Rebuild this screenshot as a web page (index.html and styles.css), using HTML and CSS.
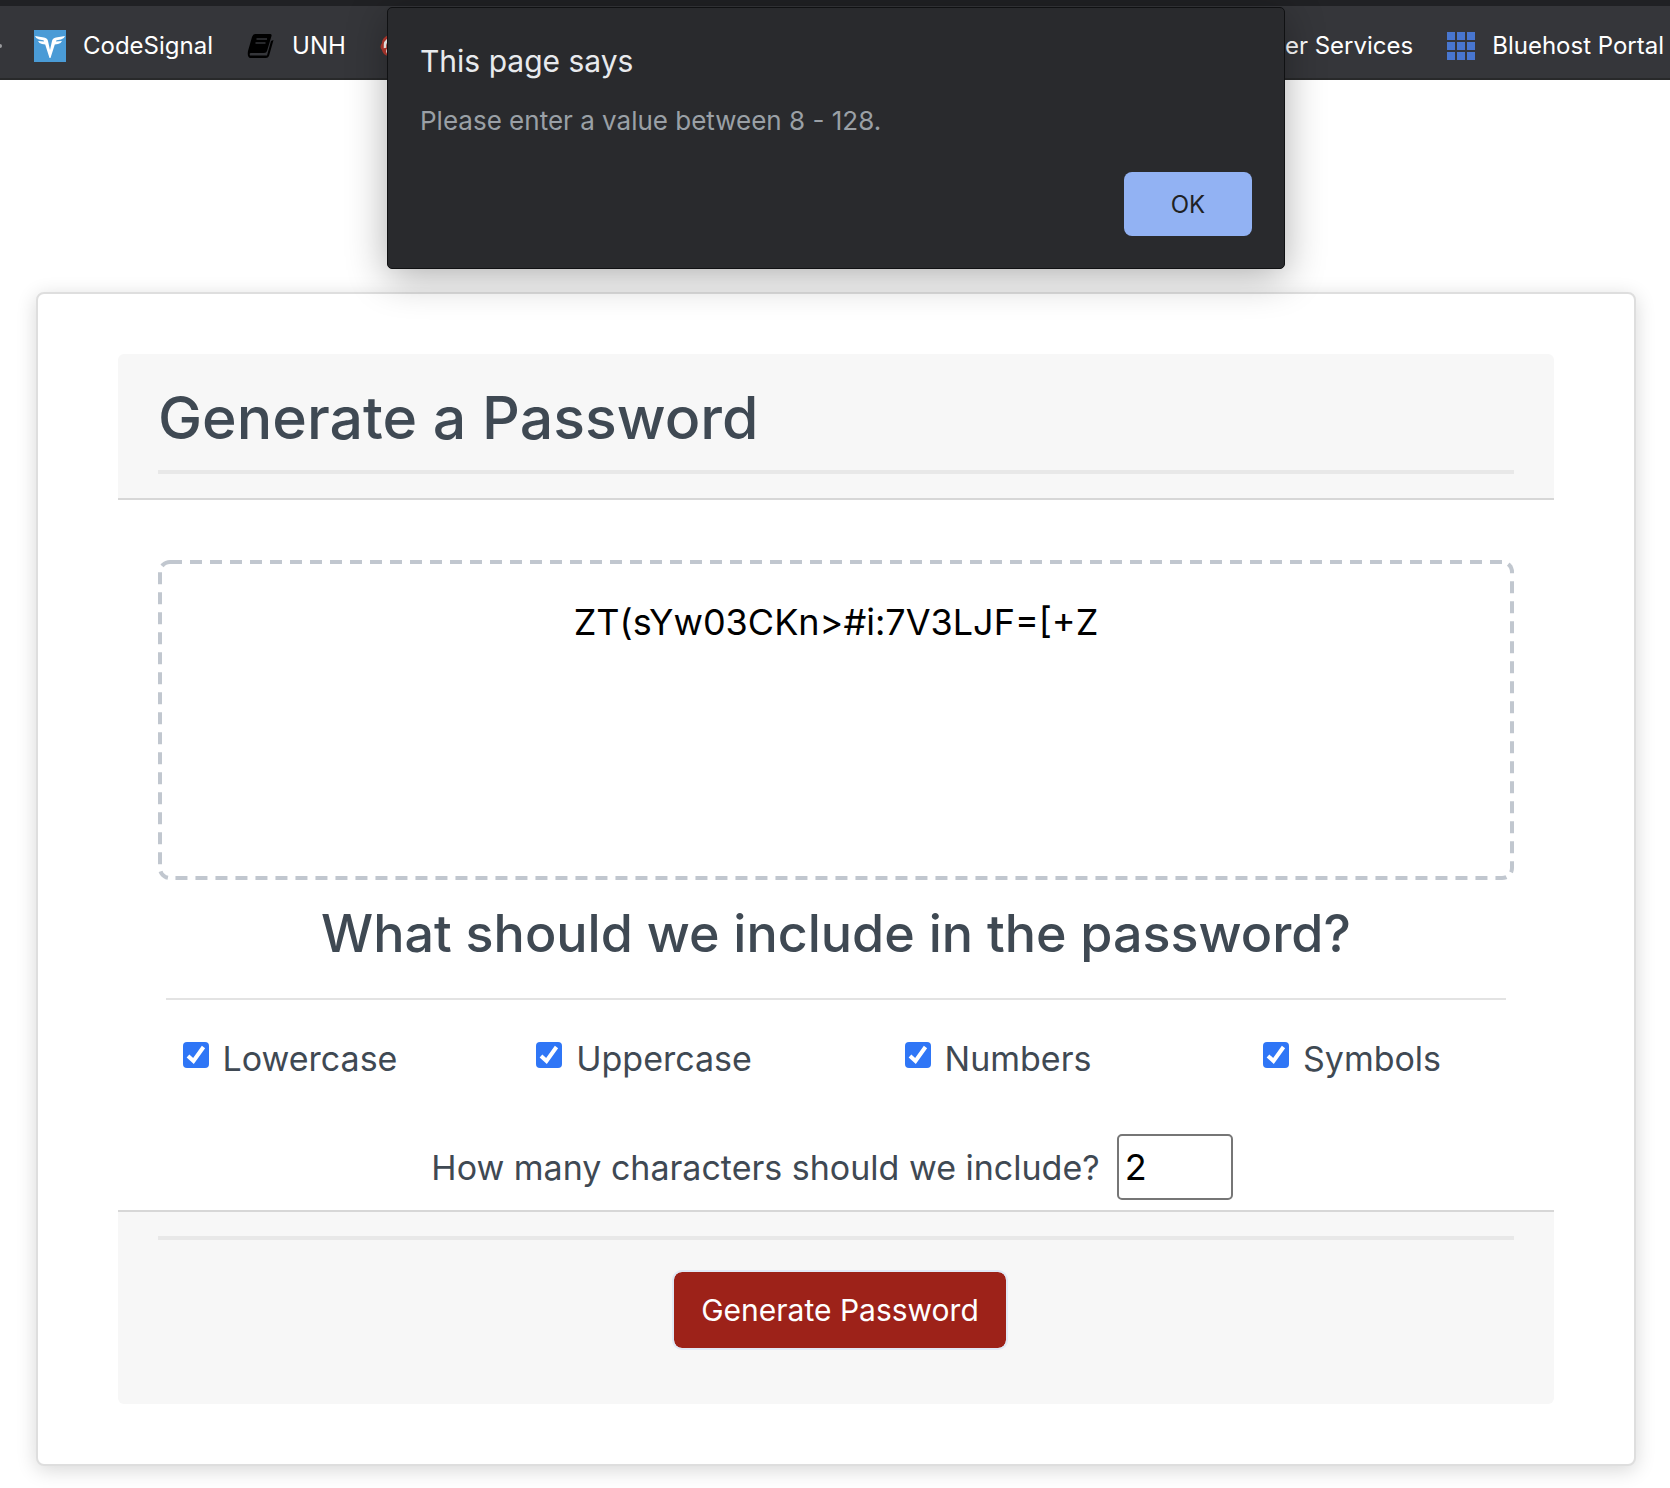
FILE: index.html
```html
<!DOCTYPE html>
<html lang="en">
<head>
<meta charset="utf-8">
<title>Password Generator</title>
<link rel="stylesheet" href="styles.css">
</head>
<body>
<nav class="bookmarks" aria-label="Bookmarks">
  <div class="bookmark-group">
    <span class="overflow-dot"></span>
    <a class="bookmark" href="#">
      <svg width="32" height="32" viewBox="0 0 32 32" aria-hidden="true"><rect width="32" height="32" fill="#4a9bd6"/><path d="M1 6 L10 7.500 Q13.500 8 14 11 L16 20 L18 11 Q18.500 8 22 7.500 L31 6 Q30 9 27 9.500 L22.500 10.300 L22 11.500 L28 11 Q27 13.500 24 14 L20.800 14.500 L16.500 28 H15.500 L11.200 14.500 L8 14 Q5 13.500 4 11 L10 11.500 L9.500 10.300 L5 9.500 Q2 9 1 6Z" fill="#fff"/></svg>
      CodeSignal</a>
    <a class="bookmark" href="#">
      <svg width="28" height="26" viewBox="0 0 28 26" aria-hidden="true"><path d="M8 1 H23 Q25 1 24.500 3 L20 18 Q19.500 20 17 20 H4 Q2 20 3 22.500 H20 L24 8 L26.500 7 L22 23 Q21 25 19 25 H3 Q0 24 1 18 L5 4 Q6 1 8 1Z" fill="#000"/><path d="M9.500 6 H20 M8.500 10 H18.500" stroke="#35363a" stroke-width="1.500"/></svg>
      UNH</a>
    <a class="bookmark" href="#" aria-label="Bookmark">
      <svg width="22" height="22" viewBox="0 0 22 22" aria-hidden="true"><path d="M8 0 Q2 3 2 8 Q-1 12 2 15 Q3 20 8 21 H18 V0Z" fill="#b93a30"/><path d="M10 4 Q4 6 5 13 M10 13 Q6 15 8 18" fill="none" stroke="#fff" stroke-width="2.500"/></svg>
    </a>
  </div>
  <div class="bookmark-group">
    <a class="bookmark" href="#">er Services</a>
    <a class="bookmark" href="#">
      <svg width="28" height="28" viewBox="0 0 28 28" aria-hidden="true"><path fill="#4876cf" d="M0 0h8v8H0zM10 0h8v8h-8zM20 0h8v8h-8zM0 10h8v8H0zM10 10h8v8h-8zM20 10h8v8h-8zM0 20h8v8H0zM10 20h8v8h-8zM20 20h8v8h-8z"/></svg>
      Bluehost Portal</a>
  </div>
</nav>

<div class="alert" role="alertdialog" aria-labelledby="alert-title" aria-describedby="alert-text">
  <h1 class="alert-title" id="alert-title">This page says</h1>
  <p class="alert-text" id="alert-text">Please enter a value between 8 - 128.</p>
  <button class="alert-ok" type="button">OK</button>
</div>

<main class="card">
  <header class="card-header">
    <h2 class="title">Generate a Password</h2>
    <hr class="rule">
  </header>
  <section class="card-body">
    <textarea class="password" readonly aria-label="Your secure password">ZT(sYw03CKn&gt;#i:7V3LJF=[+Z</textarea>
    <h3 class="question">What should we include in the password?</h3>
    <hr class="thin-rule">
    <div class="options">
      <label class="option"><input class="check" type="checkbox" checked>Lowercase</label>
      <label class="option"><input class="check" type="checkbox" checked>Uppercase</label>
      <label class="option"><input class="check" type="checkbox" checked>Numbers</label>
      <label class="option"><input class="check" type="checkbox" checked>Symbols</label>
    </div>
    <div class="length">
      <label for="length">How many characters should we include?</label>
      <input class="length-input" id="length" type="number" min="8" max="128" value="2">
    </div>
  </section>
  <footer class="card-footer">
    <hr class="rule">
    <button class="generate" type="button">Generate Password</button>
  </footer>
</main>
</body>
</html>
```
FILE: styles.css
```css
* {
  box-sizing: border-box;
}

body {
  margin: 0;
  background: #fff;
  color: #3f4953;
  font-family: Inter, "Liberation Sans", sans-serif;
  font-size: 34px;
}

button,
input,
textarea {
  font-family: inherit;
}

.bookmarks {
  display: flex;
  justify-content: space-between;
  height: 80px;
  padding: 8px 6px 0 0;
  border-top: 6px solid #202124;
  border-bottom: 2px solid #28292a;
  background: #35363a;
}

.bookmark-group {
  display: flex;
  align-items: center;
  gap: 34px;
}

.overflow-dot {
  width: 2px;
  height: 4px;
  margin-right: -2px;
  border-radius: 0 2px 2px 0;
  background: #9a9b9d;
}

.bookmark {
  display: flex;
  align-items: center;
  gap: 17px;
  color: #fff;
  font-size: 24px;
  line-height: 32px;
  text-decoration: none;
}

.alert {
  position: absolute;
  top: 7px;
  left: 387px;
  right: 385px;
  display: flex;
  flex-direction: column;
  padding: 36px 32px 32px;
  border: 1px solid #101113;
  border-radius: 5px;
  background: #292a2d;
  box-shadow: 0 8px 40px rgba(0, 0, 0, 0.32);
}

.alert-title {
  margin: 0;
  color: #e8eaed;
  font-size: 30px;
  font-weight: 400;
  line-height: 34px;
}

.alert-text {
  margin: 27px 0 35px;
  color: #9aa0a6;
  font-size: 26px;
  line-height: 32px;
}

.alert-ok {
  align-self: flex-end;
  width: 128px;
  height: 64px;
  border: 0;
  border-radius: 8px;
  background: #92b2f3;
  color: #202124;
  font-size: 24px;
}

.card {
  margin: 212px 34px 22px 36px;
  padding: 60px 80px;
  border: 2px solid #dedede;
  border-radius: 8px;
  background: #fff;
  box-shadow: 0 4px 20px rgba(0, 0, 0, 0.16);
}

.card-header {
  padding: 24px 40px;
  border-bottom: 2px solid #d7d7d7;
  border-radius: 6px 6px 0 0;
  background: #f7f7f7;
}

.title {
  margin: 0;
  font-size: 59px;
  font-weight: 500;
  line-height: 80px;
}

.rule {
  height: 4px;
  margin: 0;
  border: 0;
  background: #e8e8e8;
}

.title + .rule {
  margin-top: 12px;
}

.card-body {
  padding: 60px 40px 10px;
}

/* The dashed outline is drawn as a background to control dash length. */
.password {
  display: block;
  width: 100%;
  height: 320px;
  padding: 34px 32px;
  border: 4px solid transparent;
  border-radius: 12px;
  background: #fff url("data:image/svg+xml,%3Csvg xmlns='http://www.w3.org/2000/svg' width='100%25' height='100%25'%3E%3Crect width='100%25' height='100%25' rx='12' fill='none' stroke='%23c1c7cf' stroke-width='8' stroke-dasharray='12 8'/%3E%3C/svg%3E") border-box;
  color: #000;
  font-size: 36px;
  line-height: 48px;
  text-align: center;
  resize: none;
}

.question {
  margin: 20px 0 0;
  font-size: 52px;
  font-weight: 500;
  line-height: 68px;
  text-align: center;
}

.thin-rule {
  height: 2px;
  margin: 30px 8px 32px;
  border: 0;
  background: #e3e3e3;
}

.options {
  display: grid;
  grid-template-columns: repeat(4, 1fr);
  margin: 0 -30px;
}

.option {
  display: flex;
  align-items: flex-start;
  justify-content: center;
  gap: 14px;
  padding-right: 30px;
  line-height: 54px;
}

.check {
  width: 26px;
  height: 26px;
  margin: 10px 0 0;
  border-radius: 4px;
  appearance: none;
  background: #fff;
}

.check:checked {
  background: #2f76f6 url("data:image/svg+xml,%3Csvg xmlns='http://www.w3.org/2000/svg' viewBox='0 0 26 26'%3E%3Cpath d='M5 14 L10.500 19 L20.500 5' fill='none' stroke='white' stroke-width='4'/%3E%3C/svg%3E") center / 26px 26px no-repeat;
}

.length {
  display: flex;
  align-items: center;
  justify-content: center;
  gap: 17px;
  margin-top: 48px;
  padding-right: 8px;
}

.length-input {
  width: 116px;
  height: 66px;
  padding: 0 6px;
  border: 2px solid #767676;
  border-radius: 5px;
  background: #fff;
  color: #000;
  font-size: 36px;
}

.card-footer {
  padding: 24px 40px 54px;
  border-top: 2px solid #d7d7d7;
  border-radius: 0 0 6px 6px;
  background: #f7f7f7;
  text-align: center;
}

.generate {
  width: 336px;
  height: 80px;
  margin: 30px 0 0 8px;
  border: 2px solid #e2e9f6;
  border-radius: 10px;
  background: #9d2219;
  background-clip: padding-box;
  color: #fff;
  font-size: 30px;
}
```
